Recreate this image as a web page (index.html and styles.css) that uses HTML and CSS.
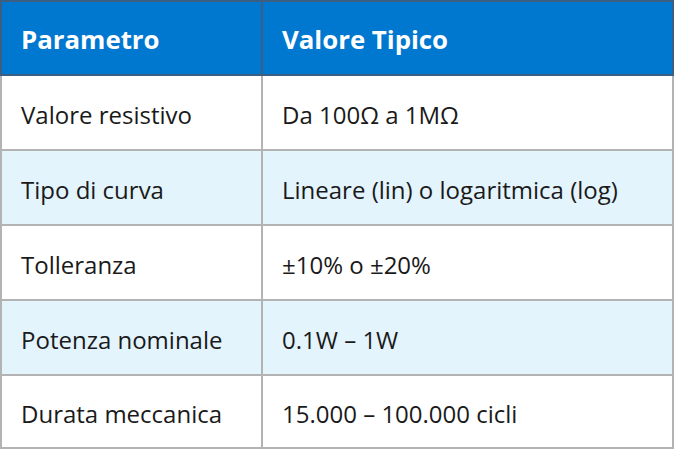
FILE: index.html
```html
<!DOCTYPE html>
<html lang="it">
<head>
<meta charset="utf-8">
<link rel="stylesheet" href="styles.css">
</head>
<body>
<table class="spec">
  <thead>
    <tr><th class="c1">Parametro</th><th class="c2">Valore Tipico</th></tr>
  </thead>
  <tbody>
    <tr><td>Valore resistivo</td><td>Da 100Ω a 1MΩ</td></tr>
    <tr class="alt"><td>Tipo di curva</td><td>Lineare (lin) o logaritmica (log)</td></tr>
    <tr><td>Tolleranza</td><td>±10% o ±20%</td></tr>
    <tr class="alt"><td>Potenza nominale</td><td>0.1W – 1W</td></tr>
    <tr><td>Durata meccanica</td><td>15.000 – 100.000 cicli</td></tr>
  </tbody>
</table>
</body>
</html>
```
FILE: styles.css
```css
html, body {
  margin: 0;
  padding: 0;
  background: #ffffff;
}
.spec {
  width: 674px;
  border-collapse: collapse;
  font-family: "Open Sans", "Noto Sans", sans-serif;
  font-size: 24px;
  color: #1a1a1a;
  table-layout: fixed;
}
.spec th, .spec td {
  border: 2px solid #b3b3b3;
  padding: 4px 20px 0 19px;
  text-align: left;
  vertical-align: middle;
  height: 69px;
}
.spec th {
  background: #0078cf;
  color: #ffffff;
  font-weight: 700;
  font-size: 25.8px;
  border-color: #3a5f80;
  padding-top: 2px;
  height: 70px;
}
.spec tbody tr:last-child td {
  height: 67px;
}
.spec .c1 { width: 220px; }
.spec .alt td {
  background: #e4f4fd;
}
```
